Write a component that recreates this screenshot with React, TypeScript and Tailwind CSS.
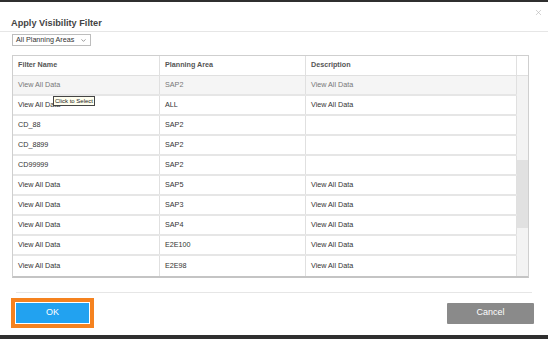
import { X, ChevronDown } from 'lucide-react'

const rows = [
  { name: 'View All Data', area: 'SAP2', desc: 'View All Data', muted: true },
  { name: 'View All Data', area: 'ALL', desc: 'View All Data', tip: true },
  { name: 'CD_88', area: 'SAP2', desc: '' },
  { name: 'CD_8899', area: 'SAP2', desc: '' },
  { name: 'CD99999', area: 'SAP2', desc: '' },
  { name: 'View All Data', area: 'SAP5', desc: 'View All Data' },
  { name: 'View All Data', area: 'SAP3', desc: 'View All Data' },
  { name: 'View All Data', area: 'SAP4', desc: 'View All Data' },
  { name: 'View All Data', area: 'E2E100', desc: 'View All Data' },
  { name: 'View All Data', area: 'E2E98', desc: 'View All Data' },
]

export default function App() {
  return (
    <div className="w-[548px] h-[339px] flex flex-col bg-white overflow-hidden font-['Liberation_Sans',Arial,sans-serif]">
      <div className="h-[2px] bg-[#2f2f2f] flex-shrink-0" />

      {/* Header */}
      <div className="h-[30px] flex items-end justify-between border-b border-[#e6e6e6] pl-[11px] pr-[5px] pb-[3px] flex-shrink-0">
        <span className="text-[9.2px] font-bold text-[#444] leading-none">Apply Visibility Filter</span>
        <X className="w-[9px] h-[9px] text-[#b0b0b0] mb-[11px]" strokeWidth={1.5} />
      </div>

      {/* Area select */}
      <div className="pl-[12px] pt-[2px] flex-shrink-0">
        <div className="w-[79px] h-[12px] border border-[#bdbdbd] flex items-center justify-between px-[3px] text-[7.2px] text-[#333]">
          <span>All Planning Areas</span>
          <ChevronDown className="w-[7px] h-[7px] text-[#555]" strokeWidth={2} />
        </div>
      </div>

      {/* Table */}
      <div className="ml-[12px] mt-[9px] w-[517px] border border-[#cfcfcf] border-b-2 border-b-[#c4c4c4] flex flex-col flex-shrink-0 text-[7.2px]">
        <div className="h-[20px] flex border-b border-[#e0e0e0]">
          <div className="w-[147px] border-r border-[#e0e0e0] flex items-center px-[5px] font-bold text-[#555]">Filter Name</div>
          <div className="w-[146px] border-r border-[#e0e0e0] flex items-center px-[5px] font-bold text-[#555]">Planning Area</div>
          <div className="w-[211px] border-r border-[#e0e0e0] flex items-center px-[5px] font-bold text-[#555]">Description</div>
          <div className="flex-1" />
        </div>
        <div className="flex">
          <div className="flex flex-col w-[504px]">
            {rows.map((r, i) => (
              <div
                key={i}
                className={`h-[20px] flex border-b-2 border-[#e6e6e6] last:border-b-0 ${r.muted ? 'bg-[#f5f5f5] text-[#777]' : 'bg-white text-[#333]'}`}
              >
                <div className="w-[147px] border-r border-[#e0e0e0] flex items-center px-[5px] relative">
                  {r.name}
                  {r.tip && (
                    <span className="absolute left-[40px] top-[0px] border border-[#444] bg-[#fffff0] px-[1px] text-[6px] leading-[8px] text-[#222]">
                      Click to Select
                    </span>
                  )}
                </div>
                <div className="w-[146px] border-r border-[#e0e0e0] flex items-center px-[5px]">{r.area}</div>
                <div className="w-[211px] border-r border-[#e0e0e0] flex items-center px-[5px]">{r.desc}</div>
              </div>
            ))}
          </div>
          <div className="flex-1 bg-[#f3f3f3] flex flex-col">
            <div className="h-[84px]" />
            <div className="h-[68px] bg-[#e1e1e1]" />
          </div>
        </div>
      </div>

      {/* Footer */}
      <div className="mx-[16px] mt-[14px] border-t border-[#e6e6e6] flex-shrink-0" />
      <div className="flex items-center justify-between pl-[11px] pr-[14px] mt-[5px] flex-shrink-0">
        <div className="border-[4px] border-[#f5821f] p-[1px]">
          <button className="w-[73px] h-[20px] bg-[#22a2f0] text-white text-[9px] flex items-center justify-center">OK</button>
        </div>
        <button className="w-[87px] h-[21px] bg-[#8a8a8a] rounded-[1px] text-white text-[9px] flex items-center justify-center">Cancel</button>
      </div>
      <div className="flex-1" />
      <div className="h-[4px] bg-[#2f2f2f] flex-shrink-0" />
    </div>
  )
}
